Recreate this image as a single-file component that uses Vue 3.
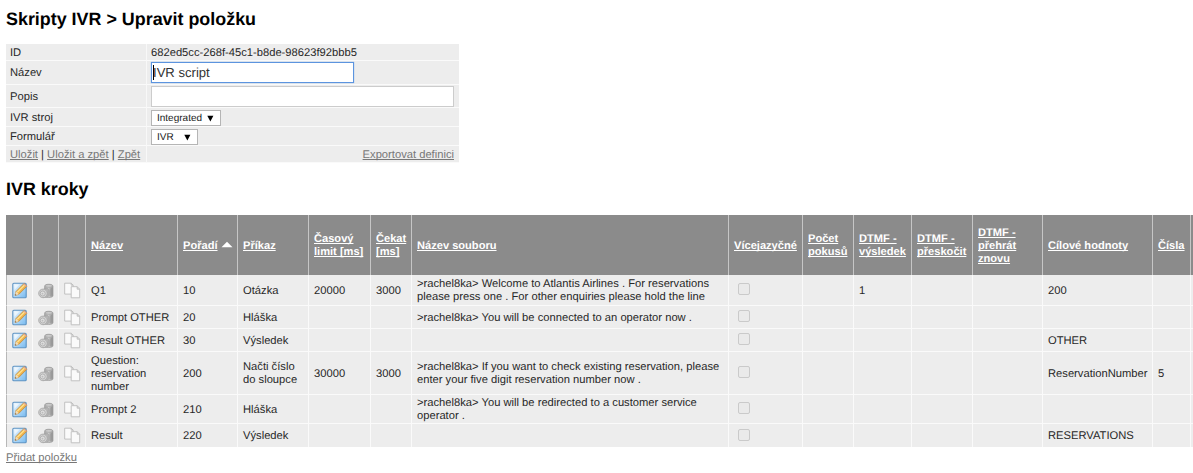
<script setup>
const columns = [
  { label: '', width: 27 },
  { label: '', width: 26 },
  { label: '', width: 27 },
  { label: 'Název', width: 92 },
  { label: 'Pořadí', width: 60, sorted: true },
  { label: 'Příkaz', width: 71 },
  { label: 'Časový\nlimit [ms]', width: 62 },
  { label: 'Čekat\n[ms]', width: 41 },
  { label: 'Název souboru', width: 317 },
  { label: 'Vícejazyčné', width: 74 },
  { label: 'Počet\npokusů', width: 51 },
  { label: 'DTMF -\nvýsledek', width: 58 },
  { label: 'DTMF -\npřeskočit', width: 61 },
  { label: 'DTMF -\npřehrát\nznovu', width: 70 },
  { label: 'Cílové hodnoty', width: 110 },
  { label: 'Čísla', width: 38 },
  { label: '', width: 40 },
]
const rows = [
  { h: 31, name: 'Q1', order: '10', cmd: 'Otázka', limit: '20000', wait: '3000', file: '>rachel8ka> Welcome to Atlantis Airlines . For reservations\nplease press one . For other enquiries please hold the line', result: '1', target: '200' },
  { h: 23, name: 'Prompt OTHER', order: '20', cmd: 'Hláška', file: '>rachel8ka> You will be connected to an operator now .' },
  { h: 23, name: 'Result OTHER', order: '30', cmd: 'Výsledek', target: 'OTHER' },
  { h: 43, name: 'Question:\nreservation\nnumber', order: '200', cmd: 'Načti číslo\ndo sloupce', limit: '30000', wait: '3000', file: '>rachel8ka> If you want to check existing reservation, please\nenter your five digit reservation number now .', target: 'ReservationNumber', digits: '5' },
  { h: 29, name: 'Prompt 2', order: '210', cmd: 'Hláška', file: '>rachel8ka> You will be redirected to a customer service\noperator .' },
  { h: 23, name: 'Result', order: '220', cmd: 'Výsledek', target: 'RESERVATIONS' },
]
const leading = ['name', 'order', 'cmd', 'limit', 'wait', 'file']
const trailing = ['attempts', 'result', 'skip', 'replay', 'target', 'digits', 'extra']
const template = columns.map((c) => c.width + 'px').join(' ')
</script>

<template>
  <main class="page">
    <svg class="defs" width="0" height="0">
      <defs>
        <linearGradient id="blue" x1="0" y1="0" x2="1" y2="1">
          <stop offset="0" stop-color="#f0f8ff" /><stop offset="1" stop-color="#75b9ef" />
        </linearGradient>
        <linearGradient id="metal" x1="0" y1="0" x2="1" y2="0">
          <stop offset="0" stop-color="#a2a2a2" /><stop offset=".45" stop-color="#d0d0d0" /><stop offset="1" stop-color="#959595" />
        </linearGradient>
      </defs>
    </svg>
    <h1>Skripty IVR &gt; Upravit položku</h1>
    <section class="form">
      <div class="label">ID</div><div class="field low">682ed5cc-268f-45c1-b8de-98623f92bbb5</div>
      <div class="label">Název</div><div class="field"><div class="input focused"><i class="caret"></i>IVR script</div></div>
      <div class="label">Popis</div><div class="field"><div class="input wide"></div></div>
      <div class="label">IVR stroj</div><div class="field low"><div class="select engine">Integrated<svg width="7" height="7"><path d="M.3 .7h6.1L3.35 6.4z" /></svg></div></div>
      <div class="label">Formulář</div><div class="field low"><div class="select kind">IVR<svg width="7" height="7"><path d="M.3 .7h6.1L3.35 6.4z" /></svg></div></div>
      <div class="label links"><a>Uložit</a> | <a>Uložit a zpět</a> | <a>Zpět</a></div><div class="field low export"><a>Exportovat definici</a></div>
    </section>
    <h2>IVR kroky</h2>
    <section class="steps">
      <div class="row head" :style="{ gridTemplateColumns: template }">
        <div v-for="(c, i) in columns" :key="i" class="cell">
          <span class="heading">{{ c.label }}</span>
          <svg v-if="c.sorted" class="sort" width="12" height="7"><path d="M.5 6.3L6 .7l5.5 5.6z" fill="#fff" /></svg>
        </div>
      </div>
      <div v-for="(r, n) in rows" :key="n" class="row body" :style="{ gridTemplateColumns: template, height: r.h + 'px' }">
        <div class="cell icon">
          <svg width="16" height="17" viewBox="0 0 16 17">
            <rect x=".8" y="1.2" width="13.4" height="14.6" rx="1" fill="url(#blue)" stroke="#5e94c4" stroke-width="1.1" />
            <path d="M2.5 14.5V8l5-5.5h-5z" fill="#fff" opacity=".55" />
            <path d="M3 13.4l1-3.9 8-8 3.1 2.5-8.2 8.3z" fill="#efb24c" stroke="#b88436" stroke-width=".7" />
            <path d="M4.7 9.7l7.3-7.2 1.1.9-7.2 7.3z" fill="#ffe08a" />
            <path d="M3 13.4l1-3.9 2.9 2.8z" fill="#f1dfbd" /><path d="M3 13.4l.4-1.5 1.1 1z" fill="#705039" />
            <path d="M11.2 2.3l.9-.9 3 2.5-.9.9z" fill="#dda5a0" />
          </svg>
        </div>
        <div class="cell icon">
          <svg width="16" height="17" viewBox="0 0 16 17">
            <path d="M6.6 4.2c0-2.6 8.4-2.6 8.4 0v9.6c0 2.3-8.4 2.3-8.4 0z" fill="url(#metal)" stroke="#9b9b9b" stroke-width=".7" />
            <ellipse cx="10.8" cy="3.9" rx="3.7" ry="1.4" fill="#cdcdcd" stroke="#969696" stroke-width=".6" />
            <path d="M12.2 6.5v7.5M13.7 6v7.6" stroke="#8b8b8b" stroke-width=".6" />
            <path d="M5.5 7.2l4.3-.6c1.8 1 1.9 7.4 0 8.4l-4.3.7z" fill="#b5b5b5" stroke="#999" stroke-width=".5" />
            <circle cx="5" cy="11.4" r="4.3" fill="#d2d2d2" stroke="#a3a3a3" stroke-width=".8" />
            <circle cx="4.7" cy="11.5" r="2.5" fill="#dedede" stroke="#a3a3a3" stroke-width=".7" />
            <circle cx="4.5" cy="11.7" r=".9" fill="#bbb" />
          </svg>
        </div>
        <div class="cell icon">
          <svg width="17" height="17" viewBox="0 0 17 17" fill="#fafafa" stroke="#bcbcbc" stroke-width=".9">
            <path d="M.7 1.2h6.5l2 2v8.9H.7zM7.2 1.2v2h2" />
            <path d="M7.2 4.7h6l2.5 2.5v8.6H7.2zM13.2 4.7v2.5h2.5" />
          </svg>
        </div>
        <div v-for="key in leading" :key="key" class="cell text"><span>{{ r[key] }}</span></div>
        <div class="cell"><i class="check"></i></div>
        <div v-for="key in trailing" :key="key" class="cell text"><span>{{ r[key] }}</span></div>
      </div>
    </section>
    <a class="add">Přidat položku</a>
  </main>
</template>

<style>
html, body { background: #fff; overflow: hidden; }
</style>

<style scoped>
.page { width: 1193px; height: 473px; overflow: hidden; box-sizing: border-box; padding: 8px 0 0 6px; font: 11.2px/13px "Liberation Sans", Arial, sans-serif; text-rendering: geometricPrecision; color: #282828; }
.defs { display: block; }
h1, h2 { margin: 0; font-size: 17.9px; line-height: 22px; color: #000; white-space: nowrap; }
h1 { height: 36px; }
h2 { height: 37px; margin-top: 15px; }
.form { display: grid; width: 453px; grid-template-columns: 141px 312px; grid-template-rows: 17px 24px 23px 19px 19px 17px; }
.label, .field { display: flex; align-items: center; box-sizing: border-box; background: #ededed; border-bottom: 1px solid #fafafa; padding-left: 4px; white-space: pre; }
.label { border-right: 1px solid #f8f8f8; }
.label, .low { padding-top: 2px; }
a { color: #777; text-decoration: underline; text-decoration-skip-ink: none; }
.input { display: flex; align-items: center; box-sizing: border-box; width: 203px; height: 21px; background: #fff; border: 1px solid #ccc; font-size: 13.1px; color: #333; }
.input.focused { border-color: #5c94df; box-shadow: 0 0 1px #78a9e8; }
.input.wide { width: 303px; }
.caret { width: 1px; height: 15px; margin-left: 1px; margin-right: -1px; background: #000; }
.select { display: flex; align-items: center; justify-content: space-between; box-sizing: border-box; width: 70px; height: 16px; padding: 0 6px 0 5px; border: 1px solid #b5b5b5; background: #fff; font-size: 10px; color: #222; }
.select.kind { width: 47px; }
.field.export { justify-content: flex-end; padding-right: 5px; }
.steps { width: 1187px; overflow: hidden; }
.row { display: grid; }
.head { height: 60px; }
.cell { display: flex; align-items: center; box-sizing: border-box; padding-left: 5px; border-right: 1px solid #fafafa; white-space: pre; overflow: hidden; }
.head .cell { padding-top: 2px; background: #8b8b8b; border-color: #c6c6c6; color: #fff; font-weight: bold; font-size: 11.1px; }
.heading { text-decoration: underline; text-decoration-skip-ink: none; }
.sort { margin: -3px 0 0 3px; flex: none; }
.body .cell { background: #ededed; border-bottom: 1px solid #fafafa; }
.body .cell.text { padding-top: 2px; }
.body .cell:first-child { border-left: 1px solid #b8b8b8; }
.body:last-child .cell { border-bottom: 0; }
.icon svg { flex: none; }
.check { box-sizing: border-box; width: 12px; height: 12px; margin: -2px 0 0 4px; border: 1px solid #cacaca; border-radius: 2px; background: #eaeaea; }
.add { display: block; margin-top: 5px; }
</style>
